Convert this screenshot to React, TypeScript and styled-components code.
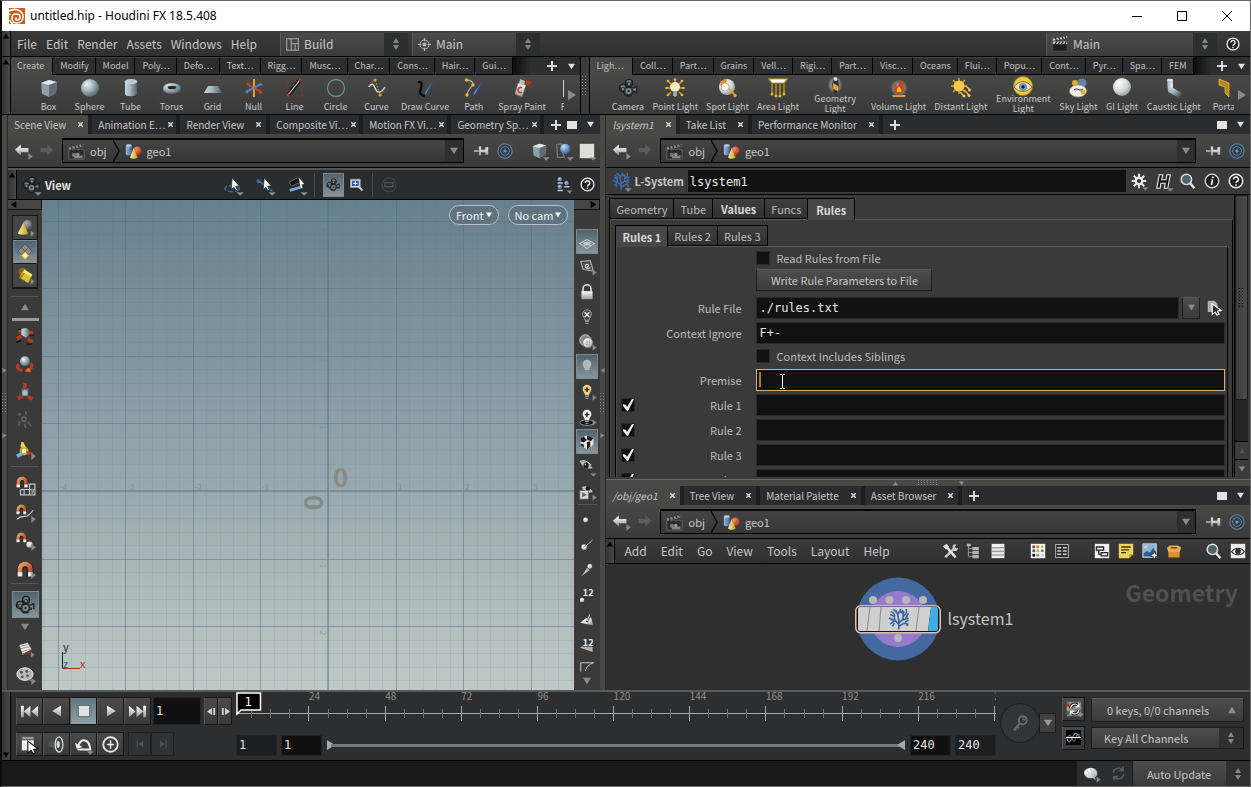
import React from "react";
import styled, { createGlobalStyle, css } from "styled-components";

const SANS = `"Noto Sans CJK SC", "Noto Sans", sans-serif`;
const MONO = `"DejaVu Sans Mono", monospace`;

const Global = createGlobalStyle`
  *, *::before, *::after { box-sizing: border-box; }
  body { margin: 0; background: #161616; }
  button, input, select { font: inherit; color: inherit; margin: 0; padding: 0; border: 0; background: none; border-radius: 0; outline: 0; }
  svg { display: block; flex: none; }
`;

/* ---------- gradients shared by the icons ---------- */
const DefsSvg = styled.svg`position: absolute;`;
const Defs = () => (
  <DefsSvg width="0" height="0" aria-hidden="true">
    <defs>
      <radialGradient id="ball" cx=".35" cy=".3" r=".75"><stop offset="0" stopColor="#eaf2f5" /><stop offset=".5" stopColor="#9fb0b9" /><stop offset="1" stopColor="#4b5a63" /></radialGradient>
      <radialGradient id="white" cx=".35" cy=".3" r=".8"><stop offset="0" stopColor="#fff" /><stop offset=".6" stopColor="#cfd2d3" /><stop offset="1" stopColor="#85898b" /></radialGradient>
      <radialGradient id="red" cx=".35" cy=".3" r=".8"><stop offset="0" stopColor="#f58d62" /><stop offset="1" stopColor="#a82c10" /></radialGradient>
      <radialGradient id="blue" cx=".35" cy=".3" r=".8"><stop offset="0" stopColor="#c7dcf5" /><stop offset="1" stopColor="#2a5592" /></radialGradient>
      <radialGradient id="glow"><stop offset="0" stopColor="#fff" stopOpacity=".7" /><stop offset="1" stopColor="#fff" stopOpacity=".1" /></radialGradient>
      <linearGradient id="tube"><stop offset="0" stopColor="#c9d5db" /><stop offset=".4" stopColor="#a9b9c2" /><stop offset="1" stopColor="#51616b" /></linearGradient>
      <linearGradient id="gold"><stop offset="0" stopColor="#fbf0a0" /><stop offset="1" stopColor="#c8991c" /></linearGradient>
      <linearGradient id="bluetube"><stop offset="0" stopColor="#9fbbe0" /><stop offset="1" stopColor="#3f66a0" /></linearGradient>
      <linearGradient id="magnet" x2="1" y2="1"><stop offset="0" stopColor="#e6a066" /><stop offset="1" stopColor="#b03d14" /></linearGradient>
      <linearGradient id="steel" x2="0" y2="1"><stop offset="0" stopColor="#fff" /><stop offset="1" stopColor="#9a9a9a" /></linearGradient>
    </defs>
  </DefsSvg>
);

/* ---------- icons ---------- */
const reel = (c = "#303436", h = "#838a8d") => (
  <>
    <path d="M7 8l8 2 4-2v7l-4-1-2 4H8l-3-4z" fill={c} stroke="#15181a" strokeWidth=".8" />
    <circle cx="5" cy="10" r="3.800" fill={c} stroke="#15181a" strokeWidth="1" />
    <circle cx="11" cy="5" r="3.800" fill={c} stroke="#15181a" strokeWidth="1" />
    <path d="M3 9a2.500 2.500 0 0 1 4 0M9 4a2.500 2.500 0 0 1 4 0" stroke={h} strokeWidth="1.500" fill="none" />
    <circle cx="10.500" cy="13" r="3" fill={h} /><circle cx="10.500" cy="13" r="1.200" fill="#2a2d2f" />
    <circle cx="11" cy="6" r="1.200" fill={h} /><circle cx="5" cy="11" r="1.200" fill={h} />
    <path d="M15 11l3-1v3l-3-1z" fill={h} />
  </>
);
const horseshoe = (
  <>
    <path d="M3 15V8.500a5 5 0 0 1 10 0V15" fill="none" stroke="#1a1a1a" strokeWidth="6" />
    <path d="M3 14V8a5 5 0 0 1 10 0v6" fill="none" stroke="url(#magnet)" strokeWidth="4.500" />
    <path d="M3 11v4M13 11v4" stroke="#eee" strokeWidth="4.500" />
  </>
);
const tree = (c: string) => (
  <path fill="none" stroke={c} strokeWidth="1.500" d="M10 20V10M10 15l-4-4-4-.5M6 11V6L3 3M6 8L2 6M10 12L9 6 7 2M9 6l3-5M10 14l4-4V5l-3-2M14 8l3-3V1M14 11l5-2M16 10l3-5M10 17l5-3 4 1M6 12l-4 3M17 14l1 3M4 11l-3-2M8 4L5 1M13 2l2 3M19 11l-3 2M6 14l-2 3" />
);
const bulb = (c: string) => (
  <>
    <path d="M10 1a5.500 5.500 0 0 1 5.500 5.500c0 3-3 4.500-3 7.500h-5c0-3-3-4.500-3-7.500A5.500 5.500 0 0 1 10 1z" fill={c} />
    <path d="M7.500 15.500h5M8 18h4" stroke="#8d8d8d" strokeWidth="1.800" />
  </>
);
const clapper = (
  <>
    <path d="M1 8h18v11H1z" fill="#2b2b2b" stroke="#6b6b6b" /><path d="M1 5l17-4v3L1 8z" fill="#8b8b8b" />
    <path d="M4 4l1 3M8 3l1 3M12 2l1 3M16 1l1 3M3 10l2-2M8 10l2-2M13 10l2-2" stroke="#222" strokeWidth="1.500" />
    <circle cx="7" cy="14" r="2.500" fill="#777" /><circle cx="11.500" cy="13.500" r="2" fill="#999" /><path d="M7 15h8l2-1v4H7z" fill="#888" />
  </>
);
const hand = <path d="M9 2l8 9-4 .5 2 4-2 1-2-4-3 3z" fill="#f2f2f2" stroke="#222" strokeWidth=".8" />;

const ICONS: Record<string, React.ReactNode> = {
  box: <><path d="M2 5l8-3 8 2-1 11-7 4-7-3z" fill="#8e9fa9" /><path d="M2 5l8-3 8 2-8 3z" fill="#dfe9ee" /><path d="M10 7l8-3-1 11-7 4z" fill="#5d6c76" /></>,
  sphere: <circle cx="10" cy="10" r="9" fill="url(#ball)" />,
  tube: <><path d="M4 3v13c0 3 12 3 12 0V3z" fill="url(#tube)" /><ellipse cx="10" cy="3.500" rx="6" ry="2" fill="#b9c7cf" stroke="#dbe5ea" strokeWidth=".7" /></>,
  torus: <><ellipse cx="10" cy="10.500" rx="9" ry="5.500" fill="url(#ball)" /><ellipse cx="10" cy="9.500" rx="4.500" ry="1.800" fill="#26292b" /></>,
  grid: <path d="M5 8h10l4 7H1z" fill="url(#tube)" />,
  null: <><path d="M10 1v18" stroke="#e1a21a" strokeWidth="2" /><path d="M3 6l14 8" stroke="#cf3f1c" strokeWidth="2" /><path d="M2 14l15-8" stroke="#5584c8" strokeWidth="2" /><path d="M1 14l3-2v4zM16 5l3 1-2 2z" fill="#5584c8" /><path d="M2 5l4 0-2 3zM19 15l-4 1 1-4z" fill="#cf3f1c" /></>,
  line: <><path d="M3 1v17h16M14 3l4 14" stroke="#7c3a31" fill="none" strokeWidth=".8" /><path d="M3 17L15 2" stroke="#111" strokeWidth="4" /><path d="M3 17L15 2" stroke="#ddd" strokeWidth="1.200" /><circle cx="3" cy="17" r="1.500" fill="#c33" /><circle cx="15" cy="2" r="1.500" fill="#c33" /></>,
  circle: <circle cx="10" cy="10" r="8.500" fill="none" stroke="#6f8793" strokeWidth="1.300" />,
  curve: <><path d="M1 9l7-8 5 17 6-9" stroke="#d08f28" fill="none" strokeDasharray="1.500 1.500" /><path d="M2 9c4-6 5-1 7 3s6 2 9-3" stroke="#ddd" fill="none" strokeWidth="1.300" /><circle cx="8" cy="2" r="1.500" fill="#e0a030" /><circle cx="13" cy="17" r="1.500" fill="#e0a030" /></>,
  drawcurve: <><path d="M3 4c6-1 3 6 2 9s3 5 5 5" stroke="#080808" fill="none" strokeWidth="2.200" /><path d="M19 1l-7 14-2 2 0-3z" fill="#5a90d0" stroke="#28497a" strokeWidth=".7" /></>,
  path: <><path d="M2 2c6 0 8 3 6 6s-5 5-5 9" stroke="#aaa" fill="none" strokeWidth="1.300" /><path d="M19 2l-7 13-3 3 1-4z" fill="#5a90d0" stroke="#28497a" strokeWidth=".7" /><circle cx="2.500" cy="2" r="1.700" fill="#eab72e" /><circle cx="9" cy="7" r="1.700" fill="#eab72e" /><circle cx="3" cy="17" r="1.700" fill="#eab72e" /></>,
  spray: <><path d="M6 5l8 2-4 12-7-3z" fill="url(#steel)" stroke="#777" strokeWidth=".5" /><path d="M8 1l5 2-1 4-5-1z" fill="#bbb" /><path d="M14 2l6 2-3 4-3-2z" fill="#b03a20" /><path d="M10 10a2.500 2.500 0 1 0 0 4" stroke="#c33d1c" fill="none" strokeWidth="1.500" /></>,
  font: <path d="M3 2h11v3H7v4h6v3H7v7H3z" fill="#ccd5da" />,
  camera: reel(),
  pointlight: <><g stroke="#d9a01e" strokeWidth="1.500"><path d="M10 1v4M3 3l3 3M17 3l-3 3M1 10h4M19 10h-4M3 17l3-3M17 17l-3-3M10 15v4" /></g><circle cx="10" cy="9" r="5" fill="#f8ecc2" /><path d="M8 13h4v5H8z" fill="#9aa" /><g fill="#e8b83a"><circle cx="10" cy="1.500" r="1.300" /><circle cx="3" cy="3" r="1.300" /><circle cx="17" cy="3" r="1.300" /><circle cx="1.500" cy="10" r="1.300" /><circle cx="18.500" cy="10" r="1.300" /><circle cx="3" cy="17" r="1.300" /><circle cx="17" cy="17" r="1.300" /></g></>,
  spotlight: <><circle cx="9" cy="9" r="8" fill="url(#white)" /><path d="M2 7a7 7 0 0 1 6-6l1 2-5 6z" fill="#e08e2c" /><circle cx="7" cy="9" r="4" fill="#f6f3ee" stroke="#999" strokeWidth=".7" /><path d="M11 11l5 5" stroke="#e0a41c" strokeWidth="2" /><circle cx="17" cy="17.500" r="1.800" fill="#e0a41c" /></>,
  arealight: <><path d="M1 1h18l-3 4H4z" fill="#fff" stroke="#cf9920" strokeWidth="1.200" /><path d="M4 6v9M8 6v12M12 6v12M16 6v9" stroke="#d9a01e" strokeWidth="1.200" /><g fill="#e8b83a"><circle cx="4" cy="16" r="1.500" /><circle cx="8" cy="18" r="1.500" /><circle cx="12" cy="18" r="1.500" /><circle cx="16" cy="16" r="1.500" /></g></>,
  geolight: <><ellipse cx="10" cy="9" rx="7" ry="8" fill="url(#glow)" /><path d="M9 1h3l2 8-2 8H9L7 9z" fill="#2f2f2f" /><path d="M8 7l5 3v5l-5-2z" fill="#f0a030" /><circle cx="10.500" cy="3" r="2" fill="#ddd" /></>,
  vollight: <><ellipse cx="10" cy="10" rx="8" ry="8" fill="url(#glow)" /><path d="M10 1c4 4 5 7 5 10a5 5 0 0 1-10 0c0-3 1-4 2-5l1 3c2-2 3-5 2-8z" fill="#d2401a" /><path d="M10 8c2 3 3 4 2 6H8c-1-2 0-3 2-6z" fill="#f6b73a" /><path d="M3 17h14l-1 2H4z" fill="#e39a32" /></>,
  distlight: <><g stroke="#dca41f" strokeWidth="1.500"><path d="M8 0v16M0 8h16M2 2l12 12M14 2L2 14" /></g><circle cx="8" cy="8" r="5.500" fill="#f4c84b" /><path d="M9 14l4 4M13 12l5 5M15 8l4 4" stroke="#e8b83a" strokeWidth="1.600" /><g fill="#f4c84b"><circle cx="13" cy="18" r="1.500" /><circle cx="18" cy="17.500" r="1.500" /><circle cx="18.500" cy="12" r="1.500" /></g></>,
  envlight: <><circle cx="10" cy="10" r="9.500" fill="#edc940" stroke="#a88818" strokeWidth=".7" /><path d="M1 11c5-7 13-7 18 0-5 6-13 6-18 0z" fill="#dbdde0" stroke="#8b7420" /><circle cx="10" cy="11" r="4" fill="#8397aa" /><circle cx="10" cy="11" r="1.800" fill="#222" /></>,
  skylight: <><circle cx="13" cy="5" r="4.500" fill="#5f87a2" /><circle cx="6" cy="5" r="3" fill="#eaa732" /><ellipse cx="9" cy="13" rx="8.500" ry="6" fill="#f1efe9" stroke="#a89a80" strokeWidth=".7" /><path d="M5 12c3-3 6 2 9-1" stroke="#222" fill="none" /><circle cx="14" cy="14" r="2.500" fill="#e2ae35" /></>,
  gilight: <circle cx="10" cy="9" r="9" fill="url(#white)" />,
  caustic: <><path d="M3 2h6v8l9 5-3 5-11-6z" fill="url(#ball)" /><ellipse cx="6" cy="2" rx="3" ry="1.200" fill="#dbe8f2" /></>,
  portal: <path d="M4 1l10 4v14l-4-4V9L4 7z" fill="#b88918" stroke="#e6c352" strokeWidth=".7" />,
  clapper,
  geo: <><path d="M1 3v10c0 2 7 2 7 0V3z" fill="url(#bluetube)" /><ellipse cx="4.500" cy="3" rx="3.500" ry="1.500" fill="#b9cdea" /><circle cx="14.500" cy="9" r="5" fill="url(#red)" /><path d="M10 6l5 11c-3 2-7 2-9 0z" fill="url(#gold)" /></>,
  back: <path d="M1 9l7-6v4h9v5H8v4z" fill="url(#steel)" />,
  fwd: <path d="M18 9l-7-6v4H3v5h8v4z" fill="#5c5c5c" />,
  pin: <><path d="M0 10h7" stroke="#ddd" strokeWidth="1.500" /><path d="M6 4h3v4h5V5h4v10h-4v-3H9v4H6z" fill="url(#steel)" stroke="#333" strokeWidth=".5" /></>,
  ring: <><circle cx="10" cy="10" r="9" fill="#333e46" stroke="#5f82a6" strokeWidth="1.300" /><circle cx="10" cy="10" r="5.500" fill="none" stroke="#5f82a6" strokeWidth="1.200" /><circle cx="10" cy="10" r="2" fill="#5e9be0" /></>,
  shapes: <><path d="M2 3l6-1v7l3 9H3z" fill="none" stroke="#777" strokeWidth="1.500" /><circle cx="12" cy="8" r="6" fill="url(#blue)" /></>,
  square: <path d="M1 1h18v18H1z" fill="#deded8" />,
  tree: tree("#3f6cae"),
  gear: <><g stroke="#e6e6e6" strokeWidth="2.600"><path d="M10 1v18M1 10h18M3.500 3.500l13 13M16.500 3.500l-13 13" /></g><circle cx="10" cy="10" r="5.500" fill="#e6e6e6" /><circle cx="10" cy="10" r="2.600" fill="#303030" /></>,
  hbig: <path d="M5 2h4L8 8h5l1-6h4l-3 16h-4l1-6H7l-1 6H2z" fill="#161616" stroke="#ececec" strokeWidth="1.300" />,
  search: <><path d="M12 12l6 7" stroke="#e2e2e2" strokeWidth="3" /><circle cx="8" cy="8" r="6.500" fill="#53636c" stroke="#e2e2e2" strokeWidth="1.800" /></>,
  info: <><circle cx="10" cy="10" r="8.500" fill="#222" stroke="#ddd" strokeWidth="1.600" /><path d="M11 4.500v2M10.500 8l-1 7" stroke="#eee" strokeWidth="2.200" /></>,
  help: <><circle cx="10" cy="10" r="8.500" fill="#222" stroke="#eee" strokeWidth="1.800" /><path d="M7 8a3 3 0 1 1 4.500 2.500c-1 .6-1.500 1-1.500 2M10 14v2" stroke="#eee" strokeWidth="2" fill="none" /></>,
  cone: <><circle cx="13" cy="6" r="6" fill="url(#ball)" opacity=".6" /><path d="M8 3l6 14c-3 2-10 2-13 0z" fill="url(#gold)" /></>,
  diamond: <><path d="M10 0l9 9-9 9-9-9z" fill="#8a8c8e" stroke="#4a4a4a" /><path d="M5.500 4.500l9 9M14.500 4.500l-9 9" stroke="#444" /><path d="M10 10l4.500 4.500L10 19l-4.500-4.500z" fill="#fffbe0" stroke="#f0a81a" strokeWidth="1.500" /></>,
  goldbox: <><circle cx="7" cy="5" r="5" fill="#8d6a14" /><path d="M9 2l10 6-5 11L3 12z" fill="#dcc02c" /><path d="M9 2l10 6-1 3-10-5z" fill="#f4e678" /><path d="M8 6l-5 6 2 1 5-6z" fill="#a88a1c" /></>,
  move: <><path d="M1 13l5-3M6 4L3 6M14 6l5 1M13 13l5 4" stroke="#b83a18" strokeWidth="4" /><path d="M0 17l6-2M12 19l6 0M2 3l4-1M15 9l5 0" stroke="#111" strokeWidth="1.500" /><path d="M6 2l5-1 4 2v6l-4 3-5-3z" fill="url(#tube)" /></>,
  rotate: <><path d="M3 10c-4 5 2 7 4 7M16 9c4 5-1 8-5 8" stroke="#b83a18" strokeWidth="3.500" fill="none" /><path d="M10 18l4-4 3 5z" fill="#e0702c" /><circle cx="10" cy="7" r="5.500" fill="url(#ball)" /></>,
  scale: <><path d="M10 0v6M2 17l6-3M18 18l-6-4" stroke="#b83a18" strokeWidth="4" /><path d="M6 6h8v9H6z" fill="#6c757a" stroke="#44494c" /><circle cx="10" cy="11" r="3" fill="#b2bec5" /></>,
  pose: <><circle cx="9" cy="9" r="2.500" fill="none" stroke="#6a6a6a" strokeWidth="1.500" /><circle cx="4" cy="4" r="2" fill="#555" /><path d="M11 0v4M4 11l-1 6M9 14l2 5M13 12l4 5" stroke="#606060" strokeWidth="2" /></>,
  handles: <><circle cx="9" cy="11" r="5" fill="#c9a81f" /><path d="M6 1l2 0 3 6-6 0z" fill="#e7dc48" /><path d="M11 11l8 2-6 3z" fill="#c5401c" /><path d="M9 11l-9 4 2 4 5-3z" fill="#7fb0d8" /><circle cx="9" cy="11" r="2.500" fill="#eee" /></>,
  snapgrid: <><path d="M9 9h12v12H5v-6M15 9v12M5 15h16M9 15v6" stroke="#c8c8c8" fill="none" strokeWidth="1.300" /><g transform="scale(.85)">{horseshoe}</g></>,
  snapcurve: <><g transform="scale(.75)">{horseshoe}</g><path d="M1 17c5-5 9-2 12-4s4-3 6-6" stroke="#ccc" fill="none" strokeWidth="1.300" /></>,
  snappoint: <><g transform="scale(.75)">{horseshoe}</g><circle cx="15" cy="14" r="3.500" fill="url(#white)" /></>,
  snapmulti: <g transform="translate(1 1) scale(1.150)">{horseshoe}</g>,
  render: <><path d="M2 4l11-3 5 9-12 6z" fill="#eee" /><path d="M1 6l16-3M3 9l14-3M5 13l13-4" stroke="#777" /><path d="M5 17l12-5" stroke="#b83a18" strokeWidth="1.500" /></>,
  film: <><ellipse cx="10" cy="9" rx="9" ry="7" fill="#b8b8b8" stroke="#eee" /><g fill="#555"><circle cx="6" cy="7" r="1.600" /><circle cx="12" cy="6" r="1.600" /><circle cx="7" cy="12" r="1.500" /><circle cx="13" cy="11" r="1.500" /></g><path d="M14 15l5 2" stroke="#999" /></>,
  orbit: <><ellipse cx="9" cy="14" rx="8" ry="3.500" fill="none" stroke="#3f6cae" strokeWidth="1.500" strokeDasharray="6 2" />{hand}</>,
  pick: <><path d="M1 4l17 13" stroke="#3f6cae" strokeWidth="2" /><circle cx="3" cy="6" r="2" fill="#3f6cae" />{hand}</>,
  fly: <><path d="M1 7l10-5 5 4-12 5z" fill="#111" stroke="#888" strokeWidth=".7" /><path d="M2 16l14-4" stroke="#7fa9dc" strokeWidth="3" /><path d="M12 2l6 7-3 .5 1 3-1.500.5-1-3z" fill="#fff" /></>,
  zoomsel: <><path d="M2 3h13v11H2z" fill="#d8d8d8" stroke="#999" /><path d="M4 5h9v7H4z" fill="#2c5cab" /><path d="M8.500 6v5M6 8.500h5" stroke="#fff" strokeWidth="1.600" /><path d="M13 13l5 5" stroke="#ccc" strokeWidth="2.500" /></>,
  ghost: <><circle cx="10" cy="10" r="8.500" fill="none" stroke="#454545" strokeWidth="1.500" /><path d="M5 7h10v5H5z" fill="none" stroke="#555" strokeWidth="1.500" /></>,
  people: <g fill="url(#blue)" stroke="#b8c4cc" strokeWidth=".6"><circle cx="5" cy="3" r="2.500" /><path d="M2 8h7" strokeWidth="2" /><circle cx="14" cy="8" r="2.500" /><path d="M11 13h7" strokeWidth="2" /><circle cx="5" cy="13" r="2.500" /><path d="M2 18h7" strokeWidth="2" /></g>,
  plane: <path d="M1 12l9-5 9 5-9 6zM5.500 9.500l9 5.500M14.500 9.500l-9 5.500M6 12l4-2 4 2-4 2z" fill="none" stroke="#d0d0d0" strokeWidth="1.300" />,
  swirl: <><path d="M2 3l12-1 4 13-13-2z" fill="#4a4e50" stroke="#b8b8b8" strokeWidth="1.300" /><path d="M14 11c-4 2-7-1-6-3s4-2 4 0-2 2-2 1" stroke="#ddd" fill="none" strokeWidth="1.300" /></>,
  lock: <><path d="M5 9V6a5 5 0 0 1 10 0v3" stroke="#e2e2e2" fill="none" strokeWidth="2" /><path d="M3 9h14v10H3z" fill="url(#steel)" /></>,
  bulboff: <>{bulb("#3d3f40")}<path d="M10 1a5.500 5.500 0 0 1 5.500 5.500c0 3-3 4.500-3 7.500h-5c0-3-3-4.500-3-7.500A5.500 5.500 0 0 1 10 1z" stroke="#aaa" strokeWidth="1.200" fill="none" /><path d="M7 4l6 6M13 4l-6 6" stroke="#eee" strokeWidth="1.800" /></>,
  headlight: <><circle cx="8" cy="8" r="7" fill="#888" stroke="#ddd" /><circle cx="11" cy="11" r="6.500" fill="url(#white)" stroke="#666" /><path d="M9 8v6M11 8v6M13 8v6" stroke="#999" /></>,
  bulb: bulb("#b4b9ba"),
  bulbplus: <>{bulb("#f0d080")}<path d="M10 4v6M7 7h6" stroke="#222" strokeWidth="1.800" /></>,
  bulbdisc: <><ellipse cx="10" cy="17" rx="9" ry="3.500" fill="#111" stroke="#aaa" />{bulb("#f4f4f4")}<path d="M10 4v6M7 7h6" stroke="#222" strokeWidth="1.800" /></>,
  checker: <><path d="M2 5l8-3 8 3v9l-8 5-8-5z" fill="#e4e4e4" /><path d="M2 5l4-1.500 4 4-4 3-4-1zM10 2l8 3-3 4-5-2zM10 10l4-1v7l-4 3zM2 12l4 1v4l-4-3z" fill="#1c1c1c" /></>,
  eye: <><path d="M1 4c5-4 11 0 17 8-8 2-14-2-17-8z" fill="#b5b5b5" stroke="#222" strokeWidth=".8" /><path d="M1 3c6-2 11 1 14 5" stroke="#e2e2e2" fill="none" strokeWidth="1.300" /><circle cx="9" cy="8" r="3.200" fill="#1c1c1c" /><circle cx="8" cy="7" r="1" fill="#ddd" /></>,
  eyeplay: <><path d="M3 4c5-4 11 0 15 6-6 3-12 1-15-6z" fill="#c4c4c4" stroke="#222" strokeWidth=".8" /><circle cx="11" cy="6" r="2.800" fill="#1c1c1c" /><path d="M1 8h11v11H1z" fill="#d6d6d6" stroke="#555" strokeWidth=".8" /><path d="M4 10l6 3.500L4 17z" fill="#6a6a6a" /></>,
  dot: <circle cx="8" cy="10" r="3.500" fill="url(#white)" />,
  dottail: <><path d="M8 12L18 3" stroke="#ccc" strokeWidth="1.300" /><circle cx="6" cy="13" r="4" fill="url(#white)" /><path d="M5 13l4-3" stroke="#444" /></>,
  needle: <><path d="M2 19L10 7l4 3z" fill="#bbb" /><circle cx="14" cy="5" r="3.500" fill="url(#white)" /></>,
  num: <><circle cx="3" cy="17" r="3.200" fill="url(#white)" /><text x="4" y="12" fontSize="13" fontWeight="700" fill="#eee" fontFamily={SANS}>12</text></>,
  quad: <><path d="M0 14l9-7 7-1 3 12z" fill="url(#white)" /><path d="M10 13l4-11" stroke="#333" strokeWidth="3" /><path d="M10 12l4-10" stroke="#eee" strokeWidth="1.500" /></>,
  quadnum: <><path d="M0 14l9-6 9 2 0 10z" fill="#b4b4b4" /><text x="4" y="11" fontSize="13" fontWeight="700" fill="#eee" stroke="#393939" strokeWidth="2" paintOrder="stroke" fontFamily={SANS}>12</text></>,
  hull: <path d="M1 17V5h17M18 5C12 7 9 10 7 16" stroke="#ccc" fill="none" strokeWidth="1.300" />,
  wrench: <><path d="M4 18L16 6" stroke="#ccc" strokeWidth="3" /><path d="M4 3l13 15" stroke="#e6e6e6" strokeWidth="3" /><path d="M13 4a4 4 0 0 1 5-2l-2 3 2 2 2-1a4 4 0 0 1-5 4z" fill="#ccc" /><path d="M1 4l5-3 3 4-4 3z" fill="#ddd" /></>,
  hier: <><path d="M3 2v15h5M3 7h6M3 12h6" stroke="#aaa" fill="none" /><path d="M1 1h5v3H1zM8 5h8v4H8zM8 10h8v4H8zM8 15h8v4H8z" fill="#b4b4b4" /></>,
  list: <><path d="M2 1h16v18H2z" fill="#f0f0f0" /><path d="M2 6h16M2 10.500h16M2 15h16" stroke="#9ba2a4" strokeWidth="2" /></>,
  palette: <><path d="M1 1h18v18H1z" fill="#fff" /><path d="M3 3h3.500v3.500H3z" fill="#b92b1c" /><path d="M8 3h3.500v3.500H8z" fill="#e07c20" /><path d="M13.500 3H17v3.500h-3.500z" fill="#d8c22a" /><path d="M3 8h3.500v3.500H3z" fill="#2c5cab" /><path d="M8 8h3.500v3.500H8z" fill="#c8b020" /><path d="M13.500 8H17v3.500h-3.500z" fill="#8a74c0" /><path d="M3 13.500h3.500V17H3z" fill="#111" /><path d="M8 13.500h3.500V17H8z" fill="#888" /><path d="M13.500 13.500H17V17h-3.500z" fill="#ccc" /></>,
  table: <><path d="M2 2h16v16H2z" fill="#2b2b2b" stroke="#aaa" strokeWidth="1.300" /><path d="M4 6h5M11 6h5M4 10h5M11 10h5M4 14h5M11 14h5" stroke="#ccc" strokeWidth="2" /></>,
  netbox: <><path d="M1 1h18v18H1z" fill="#f0f0f0" /><path d="M3 5h9v4H3zM9 12h8v4H9zM6 9v5h3" fill="none" stroke="#222" strokeWidth="1.600" /></>,
  note: <><path d="M1 1h18v13l-5 5H1z" fill="#f1d25a" /><path d="M19 14h-5v5z" fill="#b8942a" /><path d="M4 5h12M4 8.500h10M4 12h6" stroke="#3d3312" strokeWidth="1.600" /></>,
  image: <><path d="M1 1h17v17H1z" fill="#86b5e0" stroke="#ddd" /><circle cx="5" cy="5" r="2" fill="#f3e070" /><path d="M2 17v-4l4-3 4 2 4-6 3 5v6z" fill="#2f5f9c" /><path d="M15.500 11v9M11 15.500h9" stroke="#111" strokeWidth="4" /><path d="M15.500 12v7M12 15.500h7" stroke="#fff" strokeWidth="2" /></>,
  crate: <><path d="M3 10h14v8H3z" fill="#d9932e" /><path d="M1 6l4-3h10l4 3-2 5H3z" fill="#eab052" /><path d="M6 5h8v2H6z" fill="#7b4c12" /></>,
  eyebox: <><path d="M1 1h18v18H1z" fill="#eee" /><path d="M2 11c4-6 12-6 16 0-4 5-12 5-16 0z" fill="#fff" stroke="#222" strokeWidth="1.300" /><circle cx="10" cy="10.500" r="3.500" fill="#333" /></>,
  playfirst: <path d="M1 4h3v12H1zM11 4v12L4 10zM19 4v12l-7-6z" fill="url(#steel)" />,
  playrev: <path d="M15 3v14L4 10z" fill="url(#steel)" />,
  stop: <path d="M3 3h14v14H3z" fill="#dfe3e4" stroke="#555" />,
  play: <path d="M5 3v14l11-7z" fill="url(#steel)" />,
  playlast: <path d="M16 4h3v12h-3zM1 4v12l7-6zM9 4v12l7-6z" fill="url(#steel)" />,
  stepback: <path d="M11 2v16L0 10zM14 2h4v16h-4z" fill="#d5d5d5" />,
  stepfwd: <path d="M9 2v16l11-8zM2 2h4v16H2z" fill="#d5d5d5" />,
  panel: <><path d="M1 1h14v3H1z" fill="#999" /><path d="M1 5h14v12H1z" fill="#eee" /><path d="M8 6v14l4-3 2 4 3-1-2-4 5-1z" fill="#fff" stroke="#111" strokeWidth="1.300" /></>,
  speaker: <><path d="M1 7h4l8-6v18l-8-6H1z" fill="#555" /><ellipse cx="13" cy="10" rx="4.500" ry="9" fill="#3a4043" stroke="#ddd" strokeWidth="1.500" /><ellipse cx="12" cy="10" rx="2" ry="4" fill="#cfd7da" /></>,
  loop: <><path d="M4 11C8 1 17 4 18 16H3" stroke="#eee" strokeWidth="2.400" fill="none" /><path d="M0 8l9 5-7 2z" fill="#eee" /></>,
  clock: <><circle cx="10" cy="10" r="8.500" fill="#3c3c3c" stroke="#e6e6e6" strokeWidth="2.200" /><path d="M10 5v10M6 10h8" stroke="#f2f2f2" strokeWidth="1.800" /></>,
  keyprev: <path d="M4 4h2v12H4zM15 4v12l-8-6z" fill="#4d544f" />,
  keynext: <path d="M14 4h2v12h-2zM5 4v12l8-6z" fill="#4d544f" />,
  key: <><circle cx="13" cy="7" r="4.500" fill="none" stroke="#6e6e6e" strokeWidth="2" /><circle cx="14" cy="6" r="1.300" fill="#6e6e6e" /><path d="M10 10l-7 8M6 13l3 3M4 16l2 2" stroke="#6e6e6e" strokeWidth="2" /></>,
  scope: <><path d="M1 1h18v18H1z" fill="#8a8a8a" /><path d="M1 3h3v4H1z" fill="#b92b1c" /><path d="M1 8h3v4H1z" fill="#c8b020" /><path d="M1 13h3v4H1z" fill="#2c5cab" /><path d="M6 9a5 5 0 0 1 9-3M16 11a5 5 0 0 1-9 3" stroke="#111" strokeWidth="4" fill="none" /><path d="M6 9a5 5 0 0 1 9-3M16 11a5 5 0 0 1-9 3M16 3v4h-4M6 17v-4h4" stroke="#f2f2f2" strokeWidth="1.600" fill="none" /></>,
  wave: <><path d="M0 0h20v20H0z" fill="#050505" /><path d="M1 11c3 9 5 4 7 0s4-8 6-6 3 3 5 5" stroke="#5f92d8" fill="none" strokeWidth="1.500" /><path d="M1 11c3-5 5-5 7 0s3 6 5 0 3-6 6-4" stroke="#e0a030" fill="none" /><path d="M0 10h20" stroke="#fff" strokeWidth="1.500" /></>,
  brain: <><path d="M2 11c-2-4 1-7 4-8 4-2 9 0 11 3s1 7-2 8l1 4-4-3c-5 1-8 0-10-4z" fill="url(#white)" /><path d="M5 6c3 2 3 4 1 6M10 4c-1 3 3 4 1 9M14 6c-2 3 1 4 0 7" stroke="#999" strokeWidth=".7" fill="none" /></>,
  refresh: <path d="M3 9a7 7 0 0 1 12-4M17 11a7 7 0 0 1-12 4M16 1v5h-5M4 19v-5h5" stroke="#5e5e5e" fill="none" strokeWidth="2" />,
  layout: <path d="M1 1h18v18H1zM8 1v18M8 9h11M14 9v10" fill="none" stroke="#aaa" strokeWidth="1.600" />,
  target: <><circle cx="10" cy="10" r="7" fill="none" stroke="#b8b8b8" strokeWidth="1.500" /><circle cx="10" cy="10" r="3" fill="#b8b8b8" /><path d="M10 0v5M10 15v5M0 10h5M15 10h5" stroke="#b8b8b8" strokeWidth="1.800" /></>,
  slate: <><path d="M1 10h18v9H1z" fill="#1d1d1d" stroke="#555" /><path d="M1 3l18-3v3L1 6zM1 7h18v3H1z" fill="#c4c4c4" /><path d="M4 2l2 4M8 1l2 4M12 0l2 4M16 0l2 4M6 7l-2 3M10 7l-2 3M14 7l-2 3M18 7l-2 3" stroke="#222" strokeWidth="1.600" /></>,
  filepick: <><path d="M1 1h9l4 4v11H1z" fill="#b5aeb0" /><path d="M7 5v14l4-3 2 4 3-1-2-4 5-1z" fill="#2a2a2a" stroke="#fff" strokeWidth="1.500" /></>,
};

type Corner = "r" | "d";
const Icon = ({ n, s = 18, corner }: { n: string; s?: number; corner?: Corner }) => (
  <svg width={s} height={s} viewBox="0 0 20 20" overflow="visible" aria-hidden="true">
    {ICONS[n]}
    {corner === "r" && <path d="M17 13l5 4-5 4z" fill="#8a8a8a" />}
    {corner === "d" && <path d="M14 18h8l-4 4z" fill="#8a8a8a" />}
  </svg>
);
const Tri = ({ dir = "down", size = 8, color = "#c8c8c8" }: { dir?: "up" | "down" | "left" | "right"; size?: number; color?: string }) => (
  <svg width={size} height={size} viewBox="0 0 10 10" aria-hidden="true">
    <path fill={color} d={{ up: "M0 9h10L5 1z", down: "M0 1h10L5 9z", left: "M9 0v10L1 5z", right: "M1 0v10l8-5z" }[dir]} />
  </svg>
);
const UpDown = () => (
  <svg width="8" height="14" viewBox="0 0 8 14" aria-hidden="true"><path d="M1 6h6L4 1zM1 8h6l-3 5z" fill="#868686" /></svg>
);
const Plus = () => (
  <svg width="10" height="10" viewBox="0 0 10 10" aria-hidden="true"><path d="M5 0v10M0 5h10" stroke="#dcdcdc" strokeWidth="2" /></svg>
);
const Dots = ({ wide }: { wide?: boolean }) => (
  <svg width={wide ? 21 : 6} height={wide ? 6 : 20} aria-hidden="true">
    {Array.from({ length: wide ? 21 : 14 }, (_, i) => (
      <rect key={i} width="1" height="1" fill="#858585" x={wide ? (i % 7) * 3 : (i % 2) * 3} y={wide ? Math.floor(i / 7) * 2 : Math.floor(i / 2) * 3} />
    ))}
  </svg>
);

/* ---------- window frame ---------- */
const Window = styled.div`
  display: flex; flex-direction: column; height: 100vh; min-height: 640px; overflow: hidden;
  border: 1px solid #6a6a6a; border-left: 2px solid #0c0c0c;
  background: #2d2e30; color: #c6c6c6; font: 11px/16px ${SANS};
`;
const TitleBar = styled.header`
  display: flex; align-items: center; gap: 5px; flex: 0 0 30px; padding: 0 18px 0 7px;
  background: #fff; color: #000; font-family: "Noto Sans", sans-serif; font-size: 12px;
`;
const WindowButtons = styled.div`display: flex; gap: 35px; margin-left: auto;`;
const Plain = styled.button`display: flex; align-items: center; justify-content: center;`;

const Grip = styled.div<{ $down?: boolean }>`
  display: flex; justify-content: center; align-items: ${p => (p.$down ? "flex-end" : "flex-start")};
  flex: 0 0 9px; padding: 2px 0; background: linear-gradient(90deg, #333, #484848); border-right: 1px solid #000;
`;
const BarRow = styled.div<{ $h: number }>`display: flex; flex: 0 0 ${p => p.$h}px; border-bottom: 1px solid #000; overflow: hidden;`;

const MenuStrip = styled.nav`
  display: flex; align-items: center; gap: 9px; flex: 1; min-width: 0; padding: 0 10px 0 6px;
  background: linear-gradient(#3a3a3a, #303030); font-size: 12px;
`;
const MenuButton = styled.button`line-height: 20px;`;
const Picker = styled.label<{ $w: number; $gap?: number }>`
  display: flex; align-items: center; width: ${p => p.$w}px; height: 24px; margin-left: ${p => p.$gap ?? 0}px;
  background: #2d2e2e; border-top: 1px solid #404040; border-left: 1px solid #5a5a5a;
  & > span { display: flex; align-items: center; gap: 5px; flex: 1; height: 100%; padding-left: 5px; background: linear-gradient(#4a4a4a, #3c3c3c); }
  select { appearance: none; flex: 1; min-width: 0; }
  & > svg { margin: 0 8px; }
`;
const Spacer = styled.div`flex: 1;`;

/* ---------- shelves ---------- */
const Shelf = styled.section<{ $grow: number }>`display: flex; flex-direction: column; min-width: 0; flex: ${p => p.$grow} 1 0; overflow: hidden;`;
const ShelfTabs = styled.div`display: flex; flex: 0 0 18px; background: #232425; font-size: 9px; color: #c0c0c0; overflow: hidden;`;
const ShelfTab = styled.button<{ $on?: boolean }>`
  flex: none; padding: 0 6px 0 7px; border-right: 1px solid #000; border-bottom: 1px solid #000; border-top: 1px solid #444;
  line-height: 16px; background: #2c2d2f;
  ${p => p.$on && css`background: #484847; border-bottom-color: #484847; padding: 0 8px 0 6px;`}
`;
const ShelfEnd = styled.div`
  display: flex; align-items: center; gap: 11px; margin-left: auto; padding: 0 5px 0 0; flex: 1; justify-content: flex-end;
  background: linear-gradient(90deg, #0d0d0d, #2d2e30 18px);
`;
const ShelfBody = styled.div`display: flex; flex: 1; min-height: 0; background: linear-gradient(#484847, #383838);`;
const ToolRow = styled.div`display: flex; flex: 1; min-width: 0; overflow: hidden; padding-left: 17px;`;
const Tool = styled.button<{ $two?: boolean }>`
  display: flex; flex-direction: column; align-items: center; flex: none;
  min-width: 41px; padding: 3px 4px 0; font-size: 9px; line-height: 14px; color: #c8c8c8;
  span { margin-top: 2px; white-space: nowrap; }
  ${p => p.$two && css`width: 64px; padding-top: 1px; line-height: 10px; span { margin-top: -2px; }`}
`;
const ToolLine = styled.em`display: block; font-style: normal;`;
const MoreTools = styled(Plain)`flex: 0 0 16px;`;
const ShelfSplit = styled.div`display: flex; align-items: center; justify-content: center; flex: 0 0 10px; background: #3c3c3c; border: solid #000; border-width: 0 1px;`;

const ShelfPane = ({ grow, tabs, tools }: { grow: number; tabs: string[]; tools: [string, string][] }) => (
  <Shelf $grow={grow}>
    <ShelfTabs>
      {tabs.map((t, i) => <ShelfTab key={t + i} $on={i === 0}>{t}</ShelfTab>)}
      <ShelfEnd><Plain aria-label="Add shelf"><Plus /></Plain><Plain aria-label="Shelf menu"><Tri size={7} color="#e0e0e0" /></Plain></ShelfEnd>
    </ShelfTabs>
    <ShelfBody>
      <ToolRow>
        {tools.map(([icon, label]) => {
          const two = icon === "geolight" || icon === "envlight";
          return (
            <Tool key={label} $two={two}>
              <Icon n={icon} s={20} />
              <span>{two ? label.split(" ").map(w => <ToolLine key={w}>{w}</ToolLine>) : label}</span>
            </Tool>
          );
        })}
      </ToolRow>
      <MoreTools aria-label="More tools"><svg width="9" height="12" viewBox="0 0 9 12"><path d="M0 1v10l8-5z" fill="#8a8a8a" /></svg></MoreTools>
    </ShelfBody>
  </Shelf>
);

/* ---------- panes ---------- */
const Main = styled.main`display: flex; flex: 1; min-height: 0;`;
const Gutter = styled.div`
  display: flex; flex-direction: column; align-items: center; justify-content: center; gap: 20px;
  flex: 0 0 6px; background: #484846; border-right: 1px solid #2a2a2a; overflow: hidden;
`;
const Pane = styled.section<{ $grow: number }>`display: flex; flex-direction: column; min-width: 0; flex: ${p => p.$grow} 1 0;`;
const PaneTabs = styled.div`display: flex; flex: 0 0 19px; background: #2b2c2e; font-size: 10px; overflow: hidden;`;
const PaneTab = styled.div<{ $on?: boolean; $tight?: boolean; $italic?: boolean }>`
  display: flex; align-items: center; gap: ${p => (p.$tight ? 3 : 12)}px; flex: none; padding: 0 ${p => (p.$tight ? 3 : 5)}px 0 6px;
  background: ${p => (p.$on ? "#484847" : "#2b2c2e")}; border-right: 4px solid ${p => (p.$on ? "#202122" : "#1c1d1e")};
  font-style: ${p => (p.$italic ? "italic" : "normal")};
`;
const TabTail = styled.div`display: flex; align-items: center; gap: 10px; margin-left: auto; padding-right: 6px;`;
const Tail = styled.div`display: flex; align-items: center; padding-left: 7px;`;
const Swatch = styled.span`width: 10px; height: 8px; background: #e2e2e2;`;
const PathRow = styled.div`
  display: flex; align-items: center; gap: 7px; flex: 0 0 34px; padding: 0 5px 0 6px;
  background: linear-gradient(#484847, #3a3a3a); border-bottom: 1px solid #000;
`;
const PathBox = styled.div`
  display: flex; align-items: stretch; flex: 1; min-width: 0; height: 25px; margin: 0 3px 0 0;
  border: 1px solid #000; border-top-width: 2px; background: linear-gradient(#444, #363636); font-size: 11px;
  a { display: flex; align-items: center; gap: 5px; padding: 0 6px 0 5px; color: inherit; text-decoration: none; }
`;
const PathDrop = styled(Plain)`width: 18px; margin-left: auto; background: #2f2f2f;`;
const PathExtra = styled.div`display: flex; gap: 7px; margin-left: 11px;`;

type TabDef = [string, "tight"?];
const Tabs = ({ tabs, italic }: { tabs: TabDef[]; italic?: boolean }) => (
  <PaneTabs>
    {tabs.map(([t, k], i) => (
      <PaneTab key={t} $on={i === 0} $tight={k === "tight"} $italic={italic && i === 0}>
        <span>{t}</span>
        <Plain aria-label={`Close ${t}`}><svg width="5" height="5" viewBox="0 0 5 5"><path d="M0 0l5 5M5 0L0 5" stroke="#d6d6d6" strokeWidth="1.500" /></svg></Plain>
      </PaneTab>
    ))}
    <Tail><Plain aria-label="Add tab"><Plus /></Plain></Tail>
    <TabTail><Swatch /><Plain aria-label="Pane menu"><Tri size={7} color="#e0e0e0" /></Plain></TabTail>
  </PaneTabs>
);
const PathBar = ({ children }: { children?: React.ReactNode }) => (
  <PathRow>
    <Plain aria-label="Back"><Icon n="back" corner="r" s={17} /></Plain>
    <Plain aria-label="Forward"><Icon n="fwd" s={17} /></Plain>
    <PathBox>
      <a href="#obj"><Icon n="clapper" s={17} />obj</a>
      <svg width="7" height="22" viewBox="0 0 7 22"><path d="M0 0l6 11-6 11" fill="none" stroke="#0a0a0a" strokeWidth="1.500" /></svg>
      <a href="#geo1"><Icon n="geo" s={17} />geo1</a>
      <PathDrop aria-label="Path history"><Tri color="#8c8c8c" /></PathDrop>
    </PathBox>
    <Plain aria-label="Pin"><Icon n="pin" s={16} /></Plain>
    <Plain aria-label="Link"><Icon n="ring" s={16} /></Plain>
    {children}
  </PathRow>
);

/* ---------- scene view ---------- */
const ViewBar = styled.div`display: flex; flex: 0 0 32px; border-bottom: 1px solid #000; border-top: 2px solid #555; background: #2b2c2e;`;
const ViewPart = styled.div<{ $end?: boolean }>`
  display: flex; align-items: center; gap: 5px; flex: 1; padding: 0 5px; font-size: 11px; font-weight: 700; color: #e2e2e2;
  ${p => p.$end && css`justify-content: flex-end; gap: 9px; padding-right: 6px;`}
`;
const ViewTools = styled.div`display: flex; align-items: center; gap: 14px; margin-left: 4px;`;
const ViewPair = styled.div`display: flex; align-items: center; gap: 5px;`;
const Toggle = styled.button<{ $on?: boolean; $w?: number; $h?: number }>`
  display: flex; align-items: center; justify-content: center; flex: none; width: ${p => p.$w ?? 24}px; height: ${p => p.$h ?? 24}px;
  ${p => p.$on && css`background: linear-gradient(#4f626d, #84959d); border: 1px solid #7c8a91;`}
`;
const VSep = styled.i`width: 1px; height: 24px; background: #4a4a4a; margin: 0 -6px;`;
const ViewRow = styled.div`display: flex; flex: 1; min-height: 0;`;
const ToolColumn = styled.div<{ $w: number }>`
  display: flex; flex-direction: column; align-items: center; flex: 0 0 ${p => p.$w}px; background: #393a39; overflow: hidden;
`;
const Collapse = styled.button<{ $right?: boolean }>`
  display: flex; align-items: center; justify-content: ${p => (p.$right ? "flex-end" : "flex-start")}; align-self: stretch;
  flex: 0 0 10px; padding: 0 2px; background: #454545; border: solid #111; border-width: 0 1px 1px 0;
`;
const ModeGroup = styled.div`
  display: flex; flex-direction: column; margin: 5px 0 7px; border: 1px solid #151515; flex: none;
  button { background-color: #454545; border-bottom: 1px solid #151515; }
`;
const HSep = styled.i`flex: 0 0 1px; align-self: stretch; margin: 0 3px; background: #555;`;
const ColumnGap = styled.div<{ $h: number }>`flex: 0 0 ${p => p.$h}px;`;
const Bar = styled.i`flex: 0 0 3px; width: 27px; margin: 1px 0; background: #999da0;`;
const Viewport = styled.div`
  position: relative; flex: 1; min-width: 0; overflow: hidden;
  background: linear-gradient(#67808e, #98a8af 58%, #a8b4b7 72%, #bfc9c6);
`;
const Pills = styled.div`position: absolute; top: 5px; right: 6px; display: flex; gap: 9px;`;
const Pill = styled.button`
  display: flex; align-items: center; gap: 2px; height: 20px; padding: 0 6px;
  border: 1px solid #b4c0c6; border-radius: 10px; background: #5f747f; color: #f2f2f2; font-size: 11px;
`;
const Gizmo = styled.svg`position: absolute; left: 16px; bottom: 16px;`;

const STEP = 67.6;
const range = (a: number, b: number) => Array.from({ length: b - a + 1 }, (_, i) => a + i);
const GridPlane = () => {
  const ox = 286, oy = 291;
  return (
    <svg width="100%" height="100%" fontFamily={SANS}>
      <g stroke="#54707f" strokeOpacity=".1" shapeRendering="crispEdges">
        {range(-25, 100).map(k => { const x = ox + Math.round((k * STEP) / 5); return <line key={k} x1={x} x2={x} y1="0" y2="100%" />; })}
        {range(-25, 100).map(k => { const y = oy + Math.round((k * STEP) / 5); return <line key={k} y1={y} y2={y} x1="0" x2="100%" />; })}
      </g>
      <g stroke="#547082" strokeOpacity=".45" shapeRendering="crispEdges">
        {range(-5, 20).map(k => { const x = ox + Math.round(k * STEP); return <line key={k} x1={x} x2={x} y1="0" y2="100%" strokeWidth={k ? 1 : 2} />; })}
        {range(-5, 20).map(k => { const y = oy + Math.round(k * STEP); return <line key={k} y1={y} y2={y} x1="0" x2="100%" strokeWidth={k ? 1 : 2} />; })}
      </g>
      <g fontSize="8" fill="#8a8580" fillOpacity=".7">
        {range(-4, 3).filter(k => k).map(k => <text key={k} x={ox + Math.round(k * STEP) + 2} y={oy - 1}>{k}</text>)}
        {[-4, -3, -2, -1, 1, 2].map(k => <text key={k} transform={`translate(${ox - 8} ${oy + Math.round(k * STEP) + 2}) rotate(90)`} fill="#7f8d86">{-k}</text>)}
      </g>
      <g fontSize="26" fontWeight="700">
        <text x={ox + 5} y={oy - 4} fill="#8f897f">0</text>
        <text transform={`translate(${ox - 24} ${oy + 4}) rotate(90)`} fill="#7d8c83">0</text>
      </g>
    </svg>
  );
};

/* ---------- parameters ---------- */
const NodeHeader = styled.div`display: flex; align-items: center; gap: 4px; flex: 0 0 27px; padding: 0 6px 0 6px; background: #3a3a3a; font-size: 11px; border-bottom: 1px solid #000;`;
const NodeName = styled.input`flex: 1; min-width: 0; height: 22px; margin: 0 1px 0 0; padding: 1px 2px 0; background: #111; color: #e8e8e8; font: 12px/20px ${MONO};`;
const HeaderIcons = styled.div`display: flex; gap: 8px;`;
const Params = styled.div`display: flex; flex: 1; min-height: 0; overflow: hidden; background: #393a39; padding: 3px 1px 2px 3px;`;
const Folder = styled.div`display: flex; flex-direction: column; flex: 1; min-width: 0; height: 100%; overflow: hidden;`;
const FolderTabs = styled.div`display: flex; flex: none; margin-bottom: -1px;`;
const FolderTab = styled.button<{ $on?: boolean; $bold?: boolean; $wide?: boolean }>`
  position: relative; height: ${p => (p.$on ? 22 : 21)}px; padding: 0 ${p => (p.$wide ? 8 : 6)}px; border: 1px solid #000; border-bottom-width: ${p => (p.$on ? 0 : 1)}px; margin-right: -1px;
  line-height: 18px; background: ${p => (p.$on ? "#484747" : "linear-gradient(#3f3f3f, #303030)")};
  font-weight: ${p => (p.$bold ? 700 : 400)}; color: ${p => (p.$bold ? "#d8d8d8" : "#bdbdbd")};
`;
const FolderBody = styled.div<{ $pad?: string }>`
  flex: 1; min-height: 0; overflow: hidden; padding: ${p => p.$pad}; border: 1px solid #000; border-top-color: #5c5c5c; border-bottom: 0; box-shadow: inset 1px 0 #4c4c4c;
`;
const ParamRow = styled.div<{ $short?: boolean; $after?: number }>`
  display: grid; grid-template-columns: 24px 100px 1fr; align-items: center; height: ${p => (p.$short ? 22 : 25)}px; margin-bottom: ${p => p.$after ?? 0}px;
`;
const ParamLabel = styled.label`text-align: right; color: #bcbcbc;`;
const Value = styled.div`position: relative; display: flex; align-items: center; gap: 3px; padding-left: 15px; min-width: 0;`;
const Field = styled.input<{ $focus?: boolean }>`
  flex: 1; min-width: 0; height: 22px; padding: 1px 2px 0; background: #111; color: #e6e6e6; font: 12px/18px ${MONO};
  border: 1px solid ${p => (p.$focus ? "#d9b074" : "#2a2a2a")};
`;
const Check = styled.input<{ $inset?: boolean }>`
  appearance: none; flex: none; width: 14px; height: 14px; background: #111; border: 1px solid #2a2a2a; margin-left: ${p => (p.$inset ? 4 : 0)}px;
  &:checked { background: #111 url("data:image/svg+xml,%3Csvg xmlns='http://www.w3.org/2000/svg' viewBox='0 0 12 12'%3E%3Cpath d='M1 5l3 1 1 2 5-8 2 0-6 12H5L1 7z' fill='%23eee'/%3E%3C/svg%3E") center / 12px no-repeat; }
`;
const CheckLabel = styled.label`padding-left: 3px; color: #bcbcbc;`;
const Raised = styled.button<{ $w?: number }>`
  height: 22px; width: ${p => p.$w ?? 176}px; border: 1px solid #1f1f1f; border-top-color: #5a5a5a; background: linear-gradient(#4d4d4d, #3b3b3b); line-height: 18px;
  display: flex; align-items: center; justify-content: center;
`;
const Caret = styled.i`position: absolute; left: 18px; top: 3px; width: 2px; height: 15px; background: #a3822a;`;
const IBeam = styled.svg`position: absolute; left: 37px; top: 5px;`;
const ScrollTrack = styled.div`display: flex; flex-direction: column; flex: 0 0 14px; margin: -3px 1px 0 1px; background: #242424; border-left: 1px solid #000;`;
const ScrollThumb = styled.div`display: flex; align-items: center; justify-content: center; flex: 5 0 0; background: linear-gradient(90deg, #3c3c3c, #4c4c4c); border: 1px solid #1a1a1a; svg rect { fill: #0c0c0c; }`;
const ScrollRest = styled.div`flex: 1 0 0;`;
const ScrollButton = styled(Plain)`flex: 0 0 18px; background: #3c3c3c; border-top: 1px solid #000;`;
const PaneSplit = styled.div`display: flex; align-items: center; justify-content: center; gap: 20px; flex: 0 0 7px; background: #484846; border-top: 1px solid #6a6a6a;`;
const LowerPane = styled.section`display: flex; flex-direction: column; flex: 0 0 204px;`;
const ParamPane = styled.section`display: flex; flex-direction: column; flex: 1; min-height: 0;`;

/* ---------- network editor ---------- */
const NetBar = styled.div`display: flex; flex: 0 0 25px; border-bottom: 1px solid #000;`;
const NetMenu = styled.nav`display: flex; align-items: center; flex: 1; gap: 14px; padding: 0 4px 0 9px; background: linear-gradient(#3b3b3b, #303030); font-size: 12px;`;
const IconSet = styled.div<{ $auto?: boolean }>`display: flex; gap: 8px; margin-left: ${p => (p.$auto ? "auto" : "10px")};`;
const Network = styled.div`position: relative; flex: 1; background: #2f2f2f; overflow: hidden;`;
const Context = styled.div`position: absolute; right: 12px; top: 10px; font-size: 23px; line-height: 36px; font-weight: 700; color: #505050;`;
const NodeItem = styled.div`position: absolute; left: 249px; top: 13px; display: flex; align-items: center; gap: 6px; font-size: 16px; color: #c4c4c4; span { padding-bottom: 3px; }`;

/* ---------- playbar ---------- */
const PlayBar = styled.footer`display: flex; flex: 0 0 71px; border-top: 2px solid #5a5a5a; background: #2d2e30; border-bottom: 1px solid #000;`;
const Transport = styled.div`display: flex; flex-direction: column; gap: 7px; padding: 5px 0 0 5px; flex: none;`;
const Line = styled.div<{ $gap?: number; $before?: number }>`display: flex; align-items: center; gap: ${p => p.$gap ?? 0}px; padding-left: ${p => p.$before ?? 0}px;`;
const Key = styled.button<{ $w?: number; $h?: number; $on?: boolean; $dim?: boolean }>`
  display: flex; align-items: center; justify-content: center; width: ${p => p.$w ?? 27}px; height: ${p => p.$h ?? 28}px;
  border: 1px solid #151515; border-left-color: #555; background: linear-gradient(#4a4a4a, #393939);
  ${p => p.$on && css`background: linear-gradient(#5f7581, #8fa0a8);`}
  ${p => p.$dim && css`background: #303133; border-color: #222;`}
`;
const NumField = styled.input<{ $w: number; $h?: number; $dim?: boolean }>`
  width: ${p => p.$w}px; height: ${p => p.$h ?? 21}px; padding: 0 2px; border: 1px solid #232425; background: ${p => (p.$dim ? "#1d1e20" : "#101010")};
  color: #e2e2e2; font: 12px/18px ${MONO};
`;
const TimeArea = styled.div`display: flex; flex-direction: column; flex: 1; min-width: 0; margin: 0 4px 0 4px;`;
const Ruler = styled.div`position: relative; height: 41px;`;
const Flag = styled.div`position: absolute; left: 0; top: 0;`;
const RangeLine = styled.div`display: flex; align-items: center; gap: 4px; height: 24px;`;
const RangeTrack = styled.div`display: flex; align-items: center; flex: 1; i { flex: 1; height: 3px; margin: 0 -5px; background: #777; }`;
const KeyCluster = styled.div`display: flex; align-items: center; padding: 0 6px 6px 0; gap: 6px; flex: none;`;
const KeyRound = styled(Plain)`width: 40px; height: 40px; border-radius: 50%; background: #333435; border: 1px solid #1c1c1c; margin-right: -7px;`;
const KeyDrop = styled(Plain)`width: 17px; height: 20px; background: #404040; border: 1px solid #1c1c1c;`;
const Stack = styled.div`display: flex; flex-direction: column; gap: 5px; justify-content: center;`;
const WideRaised = styled(Raised)`width: 153px; height: 24px; font-size: 11px; padding: 0 7px 0 15px; justify-content: space-between;`;
const ChannelPick = styled.label`
  display: flex; align-items: center; width: 153px; height: 22px; border: 1px solid #1a1a1a; background: #303030;
  select { appearance: none; flex: 1; min-width: 0; height: 100%; padding-left: 12px; background: linear-gradient(#4d4d4d, #3b3b3b); font-size: 11px; }
  svg { margin: 0 8px; }
`;
const Status = styled.div`display: flex; flex: 0 0 25px; background: #191919; justify-content: flex-end;`;
const StatusIcons = styled.div`display: flex; align-items: center; gap: 12px; padding: 0 6px; background: #2c2d2e;`;
const UpdatePick = styled(ChannelPick)`width: 118px; height: 25px; border-width: 0 0 0 1px; select { padding-left: 14px; }`;

const tick = (f: number) => `${(((f - 1) / 239.5) * 100).toFixed(3)}%`;
const Timeline = () => (
  <Ruler>
    <svg width="100%" height="41" fontFamily={SANS} fontSize="10" fill="#8f8f8f" stroke="none">
      <line x1="0" x2="100%" y1="21.500" y2="21.500" stroke="#a8a8a8" />
      {range(1, 40).map(i => { const f = i * 6; const big = f % 24 === 0; return <line key={f} x1={tick(f)} x2={tick(f)} y1={big ? 14 : 17} y2={big ? 29 : 26} stroke={big ? "#a8a8a8" : "#6f6f6f"} shapeRendering="crispEdges" />; })}
      {range(1, 10).map(i => <text key={i} x={tick(i * 24)} y="8">{i * 24}</text>)}
    </svg>
    <Flag>
      <svg width="26" height="24" viewBox="0 0 26 24"><path d="M1 1h23.500v17H5l-4 4z" fill="#000" stroke="#fff" strokeWidth="1.500" /><text x="12" y="14" textAnchor="middle" fill="#fff" fontSize="12" fontFamily={MONO}>1</text></svg>
    </Flag>
  </Ruler>
);

const LEFT_TABS = ["Create", "Modify", "Model", "Poly…", "Defo…", "Text…", "Rigg…", "Musc…", "Char…", "Cons…", "Hair…", "Gui…"];
const RIGHT_TABS = ["Ligh…", "Coll…", "Part…", "Grains", "Vell…", "Rigi…", "Part…", "Visc…", "Oceans", "Flui…", "Popu…", "Cont…", "Pyr…", "Spa…", "FEM"];
const LEFT_TOOLS: [string, string][] = [["box", "Box"], ["sphere", "Sphere"], ["tube", "Tube"], ["torus", "Torus"], ["grid", "Grid"], ["null", "Null"], ["line", "Line"], ["circle", "Circle"], ["curve", "Curve"], ["drawcurve", "Draw Curve"], ["path", "Path"], ["spray", "Spray Paint"], ["font", "Font"]];
const RIGHT_TOOLS: [string, string][] = [["camera", "Camera"], ["pointlight", "Point Light"], ["spotlight", "Spot Light"], ["arealight", "Area Light"], ["geolight", "Geometry Light"], ["vollight", "Volume Light"], ["distlight", "Distant Light"], ["envlight", "Environment Light"], ["skylight", "Sky Light"], ["gilight", "GI Light"], ["caustic", "Caustic Light"], ["portal", "Portal"]];
const DISPLAY: [string, boolean?, Corner?][] = [["plane", true, "r"], ["swirl", false, "r"], ["lock"], ["bulboff"], ["headlight", false, "r"], ["bulb", true, "r"], ["bulbplus", false, "r"], ["bulbdisc", false, "r"], ["checker", true, "r"], ["eye", false, "d"], ["eyeplay", false, "r"]];

export default function App() {
  return (
    <>
      <Global />
      <Defs />
      <Window>
        <TitleBar>
          <svg width="16" height="16" viewBox="0 0 16 16"><path d="M0 0h16v16H0z" fill="#c85f1e" /><path d="M0 3c7-4 14 0 14 6 0 4-3 6-6 6s-5-2-5-5 2-4 4-4 4 1 4 3-1 3-3 3-2-2 0-2M0 6c1 0 1 0 1 1M1 12c0 2 1 3 3 4" fill="none" stroke="#fff" strokeWidth="1.600" /></svg>
          <span>untitled.hip - Houdini FX 18.5.408</span>
          <WindowButtons>
            <Plain aria-label="Minimize"><svg width="10" height="10"><path d="M0 5.500h10" stroke="#000" /></svg></Plain>
            <Plain aria-label="Maximize"><svg width="10" height="10"><path d="M.5.5h9v9h-9z" fill="none" stroke="#000" /></svg></Plain>
            <Plain aria-label="Close"><svg width="10" height="10"><path d="M0 0l10 10M10 0L0 10" stroke="#000" /></svg></Plain>
          </WindowButtons>
        </TitleBar>

        <BarRow $h={26}>
          <Grip><Tri dir="up" size={6} color="#000" /></Grip>
          <MenuStrip>
            {["File", "Edit", "Render", "Assets", "Windows", "Help"].map(m => <MenuButton key={m}>{m}</MenuButton>)}
            <Picker $w={128} $gap={14}><span><Icon n="layout" s={13} /><select aria-label="Desktop"><option>Build</option></select></span><UpDown /></Picker>
            <Picker $w={128} $gap={-5}><span><Icon n="target" s={13} /><select aria-label="Radial menu"><option>Main</option></select></span><UpDown /></Picker>
            <Spacer />
            <Picker $w={171}><span><Icon n="slate" s={16} /><select aria-label="Take"><option>Main</option></select></span><UpDown /></Picker>
            <Plain aria-label="Help"><Icon n="help" s={14} /></Plain>
          </MenuStrip>
        </BarRow>

        <BarRow $h={58}>
          <Grip><Tri dir="up" size={6} color="#000" /></Grip>
          <ShelfPane grow={569} tabs={LEFT_TABS} tools={LEFT_TOOLS} />
          <ShelfSplit><Dots /></ShelfSplit>
          <ShelfPane grow={659} tabs={RIGHT_TABS} tools={RIGHT_TOOLS} />
        </BarRow>

        <Main>
          <Gutter><Tri dir="right" size={5} color="#8a8a8a" /><Dots /><Tri dir="right" size={5} color="#8a8a8a" /></Gutter>
          <Pane $grow={592}>
            <Tabs tabs={[["Scene View"], ["Animation E…", "tight"], ["Render View"], ["Composite Vi…", "tight"], ["Motion FX Vi…", "tight"], ["Geometry Sp…", "tight"]]} />
            <PathBar>
              <PathExtra>
                <Plain aria-label="Display mode"><Icon n="box" s={17} corner="d" /></Plain>
                <Plain aria-label="Shape filter"><Icon n="shapes" s={17} corner="d" /></Plain>
                <Plain aria-label="Colour"><Icon n="square" s={16} corner="d" /></Plain>
              </PathExtra>
            </PathBar>
            <ViewBar>
              <Grip><Tri dir="up" size={6} color="#000" /></Grip>
              <ViewPart><Icon n="camera" s={18} corner="d" />View</ViewPart>
              <ViewTools>
                {["orbit", "pick", "fly"].map(n => <Plain key={n} aria-label={n}><Icon n={n} corner="d" /></Plain>)}
                <VSep />
                <ViewPair>
                  <Toggle $on $w={21} aria-label="Camera tool"><Icon n="camera" s={14} /></Toggle>
                  <Plain aria-label="Zoom region"><Icon n="zoomsel" s={15} /></Plain>
                </ViewPair>
                <VSep />
                <Plain aria-label="Ghost"><Icon n="ghost" s={16} /></Plain>
              </ViewTools>
              <ViewPart $end>
                <Plain aria-label="Visibility"><Icon n="people" s={15} corner="d" /></Plain>
                <Plain aria-label="View help"><Icon n="help" s={15} /></Plain>
              </ViewPart>
            </ViewBar>
            <ViewRow>
              <ToolColumn $w={34}>
                <Collapse aria-label="Collapse toolbox"><Tri dir="left" size={7} color="#000" /></Collapse>
                <ModeGroup>
                  <Toggle aria-label="Objects"><Icon n="cone" s={16} corner="r" /></Toggle>
                  <Toggle $on aria-label="Components"><Icon n="diamond" s={16} corner="r" /></Toggle>
                  <Toggle aria-label="Dynamics"><Icon n="goldbox" s={16} corner="r" /></Toggle>
                </ModeGroup>
                <HSep />
                <Toggle $h={20} aria-label="Scroll up"><Tri dir="up" color="#8a8a8a" /></Toggle>
                <Bar />
                {["move", "rotate", "scale", "pose"].map(n => <Toggle key={n} $h={28} aria-label={n}><Icon n={n} /></Toggle>)}
                <Toggle $h={32} aria-label="Handles"><Icon n="handles" corner="r" /></Toggle>
                <HSep />
                <ColumnGap $h={4} />
                {["snapgrid", "snapcurve", "snappoint", "snapmulti"].map(n => <Toggle key={n} $h={28} aria-label={n}><Icon n={n} corner="r" /></Toggle>)}
                <HSep />
                <ColumnGap $h={7} />
                <Toggle $on $w={27} $h={27} aria-label="View tool"><Icon n="camera" s={20} corner="r" /></Toggle>
                <Toggle $h={18} aria-label="Scroll down"><Tri color="#8a8a8a" /></Toggle>
                <Toggle $h={26} aria-label="Render"><Icon n="render" s={15} corner="r" /></Toggle>
                <Toggle $h={26} aria-label="Flipbook"><Icon n="film" corner="r" /></Toggle>
              </ToolColumn>
              <Viewport>
                <GridPlane />
                <Pills>
                  <Pill>Front<Tri size={6} color="#fff" /></Pill>
                  <Pill>No cam<Tri size={6} color="#fff" /></Pill>
                </Pills>
                <Gizmo width="30" height="34" viewBox="0 0 30 34" fontFamily={SANS} fontSize="11">
                  <path d="M4.500 12v16" stroke="#12301c" /><path d="M4 28.500h18" stroke="#a8331d" />
                  <text x="5" y="11" fill="#222">y</text><text x="5" y="28" fill="#3456a0">z</text><text x="22" y="28" fill="#b8341a">x</text>
                </Gizmo>
              </Viewport>
              <ToolColumn $w={26}>
                <Collapse $right aria-label="Collapse display bar"><Tri dir="right" size={7} color="#000" /></Collapse>
                <ColumnGap $h={19} />
                {DISPLAY.map(([n, on, c]) => <Toggle key={n} $on={on} $w={22} $h={25} aria-label={n}><Icon n={n} s={16} corner={c} /></Toggle>)}
                <HSep />
                <ColumnGap $h={2} />
                {["dot", "dottail", "needle", "num", "quad", "quadnum"].map(n => <Toggle key={n} $w={22} $h={25} aria-label={n}><Icon n={n} s={14} /></Toggle>)}
                <Toggle $w={22} $h={18} aria-label="hull"><Icon n="hull" s={15} /></Toggle>
                <Toggle $w={22} $h={12} aria-label="Scroll down"><Tri color="#8a8a8a" /></Toggle>
              </ToolColumn>
            </ViewRow>
          </Pane>
          <Gutter><Tri dir="left" size={5} color="#8a8a8a" /><Dots /><Tri dir="right" size={5} color="#8a8a8a" /></Gutter>

          <Pane $grow={643}>
            <ParamPane>
              <Tabs italic tabs={[["lsystem1"], ["Take List"], ["Performance Monitor"]]} />
              <PathBar />
              <NodeHeader>
                <Icon n="tree" s={18} corner="d" /><b>L-System</b>
                <NodeName aria-label="Node name" defaultValue="lsystem1" />
                <HeaderIcons>
                  <Plain aria-label="Options"><Icon n="gear" s={16} corner="d" /></Plain>
                  <Plain aria-label="Houdini"><Icon n="hbig" s={17} corner="d" /></Plain>
                  <Plain aria-label="Search"><Icon n="search" s={16} /></Plain>
                  <Plain aria-label="Info"><Icon n="info" s={16} /></Plain>
                  <Plain aria-label="Node help"><Icon n="help" s={16} /></Plain>
                </HeaderIcons>
              </NodeHeader>
              <Params>
                <Folder>
                  <FolderTabs>
                    <FolderTab>Geometry</FolderTab><FolderTab>Tube</FolderTab><FolderTab $bold $wide>Values</FolderTab><FolderTab>Funcs</FolderTab><FolderTab $on $bold $wide>Rules</FolderTab>
                  </FolderTabs>
                  <FolderBody $pad="5px 4px 0 5px">
                    <Folder>
                      <FolderTabs><FolderTab $on $bold>Rules 1</FolderTab><FolderTab>Rules 2</FolderTab><FolderTab>Rules 3</FolderTab></FolderTabs>
                      <FolderBody $pad="0 2px 0 1px">
                        <ParamRow $short><span /><span /><Value><Check type="checkbox" id="read" /><CheckLabel htmlFor="read">Read Rules from File</CheckLabel></Value></ParamRow>
                        <ParamRow $short $after={4}><span /><span /><Value><Raised>Write Rule Parameters to File</Raised></Value></ParamRow>
                        <ParamRow><span /><ParamLabel htmlFor="file">Rule File</ParamLabel>
                          <Value><Field id="file" defaultValue="./rules.txt" /><Raised $w={18} aria-label="File menu"><Tri size={7} color="#8c8c8c" /></Raised><Toggle $w={22} aria-label="Choose file"><Icon n="filepick" s={15} /></Toggle></Value></ParamRow>
                        <ParamRow><span /><ParamLabel htmlFor="ctx">Context Ignore</ParamLabel><Value><Field id="ctx" defaultValue="F+-" /></Value></ParamRow>
                        <ParamRow $short><span /><span /><Value><Check type="checkbox" id="sib" /><CheckLabel htmlFor="sib">Context Includes Siblings</CheckLabel></Value></ParamRow>
                        <ParamRow><span /><ParamLabel htmlFor="premise">Premise</ParamLabel>
                          <Value><Field id="premise" $focus /><Caret /><IBeam width="9" height="15" viewBox="0 0 9 15"><path d="M2 .5h2l.5.5.5-.5h2M2 14.500h2l.5-.5.5.5h2M4.500 1v13" stroke="#fff" fill="none" /></IBeam></Value></ParamRow>
                        {[1, 2, 3, 4].map(i => (
                          <ParamRow key={i}><Check $inset type="checkbox" defaultChecked aria-label={`Enable rule ${i}`} /><ParamLabel htmlFor={`r${i}`}>Rule {i}</ParamLabel><Value><Field id={`r${i}`} /></Value></ParamRow>
                        ))}
                      </FolderBody>
                    </Folder>
                  </FolderBody>
                </Folder>
                <ScrollTrack>
                  <ScrollThumb><Dots /></ScrollThumb><ScrollRest />
                  <ScrollButton aria-label="Up"><Tri dir="up" size={6} color="#555" /></ScrollButton>
                  <ScrollButton aria-label="Down"><Tri size={6} color="#8c8c8c" /></ScrollButton>
                </ScrollTrack>
              </Params>
            </ParamPane>
            <PaneSplit><Tri dir="up" size={5} color="#8a8a8a" /><Dots wide /><Tri size={5} color="#8a8a8a" /></PaneSplit>
            <LowerPane>
              <Tabs italic tabs={[["/obj/geo1"], ["Tree View"], ["Material Palette"], ["Asset Browser"]]} />
              <PathBar />
              <NetBar>
                <Grip><Tri dir="up" size={6} color="#000" /></Grip>
                <NetMenu>
                  {["Add", "Edit", "Go", "View", "Tools", "Layout", "Help"].map(m => <MenuButton key={m}>{m}</MenuButton>)}
                  <IconSet $auto>{["wrench", "hier", "list"].map(n => <Plain key={n} aria-label={n}><Icon n={n} s={16} /></Plain>)}</IconSet>
                  <IconSet>{["palette", "table"].map(n => <Plain key={n} aria-label={n}><Icon n={n} s={16} /></Plain>)}</IconSet>
                  <IconSet>{["netbox", "note", "image", "crate"].map(n => <Plain key={n} aria-label={n}><Icon n={n} s={16} /></Plain>)}</IconSet>
                  <IconSet>{["search", "eyebox"].map(n => <Plain key={n} aria-label={n}><Icon n={n} s={16} /></Plain>)}</IconSet>
                </NetMenu>
              </NetBar>
              <Network>
                <Context>Geometry</Context>
                <NodeItem>
                  <svg width="86" height="84" viewBox="0 0 86 84">
                    <circle cx="43" cy="42" r="41.500" fill="#4369a0" /><circle cx="43" cy="42" r="28" fill="#977bcb" />
                    <g fill="#b8b8b8"><circle cx="18" cy="23" r="4" /><circle cx="34.500" cy="23" r="4" /><circle cx="51" cy="23" r="4" /><circle cx="68" cy="23" r="4" /><circle cx="43" cy="61" r="4" /></g>
                    <rect x="0.800" y="28.800" width="84.400" height="27" rx="5" fill="#111" stroke="#d8bfb4" strokeWidth="1.600" />
                    <path d="M5 30h71l-3 24H5a2 2 0 0 1-2-2V32a2 2 0 0 1 2-2z" fill="#cfcfcf" />
                    <path d="M76 30h5a2 2 0 0 1 2 2v20a2 2 0 0 1-2 2h-8z" fill="#3eaee2" />
                    <path d="M15 30l-3 24M26 30l-2 24M64 30l-3 24" stroke="#8c8c8c" />
                    <g transform="translate(33 31) scale(1.080)">{tree("#3d659f")}</g>
                  </svg>
                  <span>lsystem1</span>
                </NodeItem>
              </Network>
            </LowerPane>
          </Pane>
        </Main>

        <PlayBar>
          <Grip $down><Tri size={6} color="#000" /></Grip>
          <Transport>
            <Line>
              {["playfirst", "playrev", "stop", "play", "playlast"].map(n => <Key key={n} $on={n === "stop"} aria-label={n}><Icon n={n} s={n === "playfirst" || n === "playlast" ? 19 : 16} /></Key>)}
              <Line $gap={3} $before={2}><NumField $w={48} $h={28} aria-label="Current frame" defaultValue="1" />
                <Line><Key $w={14} aria-label="Step back"><Icon n="stepback" s={9} /></Key><Key $w={14} aria-label="Step forward"><Icon n="stepfwd" s={9} /></Key></Line></Line>
            </Line>
            <Line $gap={4}>
              <Line>{["panel", "speaker", "loop", "clock"].map(n => <Key key={n} $h={24} aria-label={n}><Icon n={n} s={17} corner={n === "loop" ? "d" : undefined} /></Key>)}</Line>
              <Line><Key $dim $w={23} $h={24} aria-label="Previous key"><Icon n="keyprev" s={12} /></Key><Key $dim $w={23} $h={24} aria-label="Next key"><Icon n="keynext" s={12} /></Key></Line>
            </Line>
          </Transport>
          <TimeArea>
            <Timeline />
            <RangeLine>
              <NumField $dim $w={41} aria-label="Global start" defaultValue="1" />
              <NumField $w={41} aria-label="Range start" defaultValue="1" />
              <RangeTrack><Tri dir="right" size={10} color="#a8a8a8" /><i /><Tri dir="left" size={10} color="#a8a8a8" /></RangeTrack>
              <NumField $w={41} aria-label="Range end" defaultValue="240" />
              <NumField $dim $w={41} aria-label="Global end" defaultValue="240" />
            </RangeLine>
          </TimeArea>
          <KeyCluster>
            <KeyRound aria-label="Set key"><Icon n="key" s={18} /></KeyRound>
            <KeyDrop aria-label="Key menu"><Tri size={8} color="#9a9a9a" /></KeyDrop>
            <Stack>
              <Key $w={23} $h={24} aria-label="Scoped channels"><Icon n="scope" s={16} corner="r" /></Key>
              <Key $w={23} $h={24} aria-label="Channel editor"><Icon n="wave" s={15} /></Key>
            </Stack>
            <Stack>
              <WideRaised>0 keys, 0/0 channels<Tri dir="up" size={8} color="#8c8c8c" /></WideRaised>
              <ChannelPick><select aria-label="Key scope"><option>Key All Channels</option></select><UpDown /></ChannelPick>
            </Stack>
          </KeyCluster>
        </PlayBar>
        <Status>
          <StatusIcons><Icon n="brain" s={16} corner="r" /><Icon n="refresh" s={15} /></StatusIcons>
          <UpdatePick><select aria-label="Update mode"><option>Auto Update</option></select><UpDown /></UpdatePick>
        </Status>
      </Window>
    </>
  );
}
